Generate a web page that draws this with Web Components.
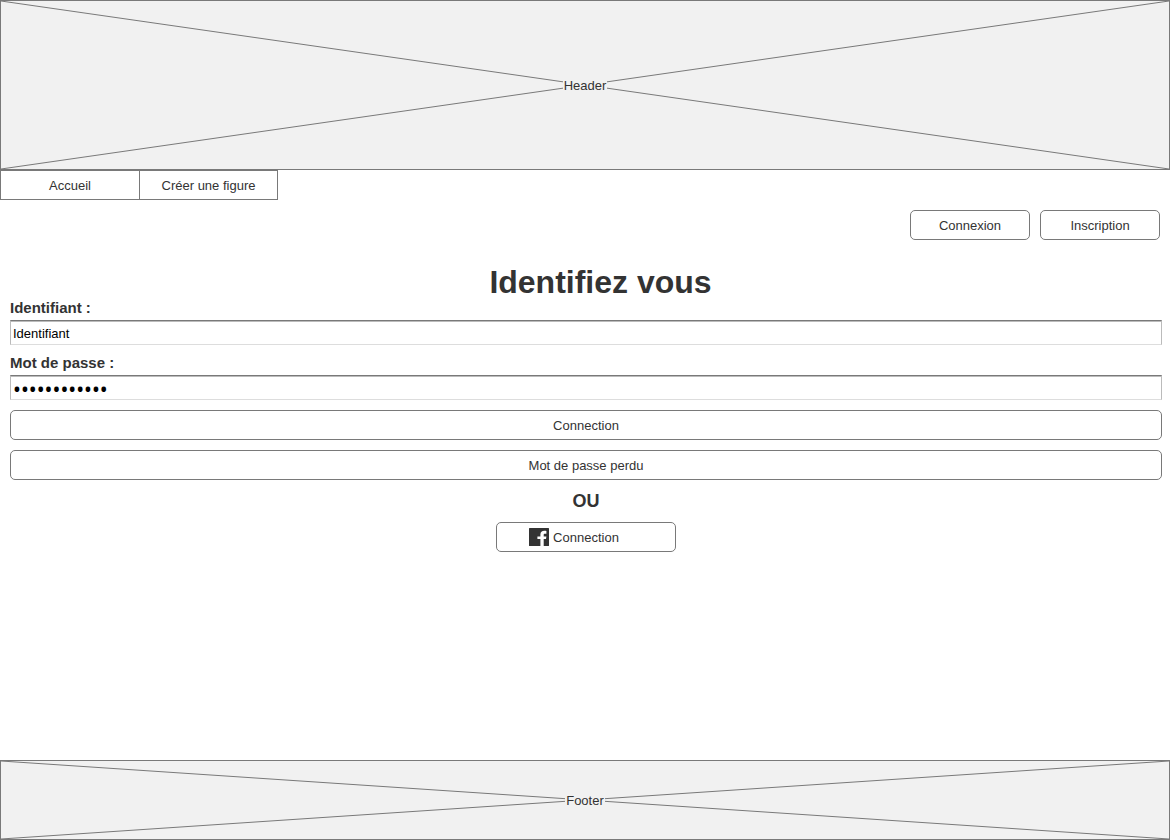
<!DOCTYPE html>
<html lang="fr">
<head>
<meta charset="utf-8">
<title>Identifiez vous</title>
<style>
  body { margin: 0; background: #fff; color: #333; font: 13px/16px "Liberation Sans", Arial, sans-serif; }
</style>
</head>
<body>
<login-page></login-page>
<script>
const define = (name, html, setup) => {
  const template = document.createElement('template');
  template.innerHTML = '<style>*, *::before { box-sizing: border-box; } :host { display: block; box-sizing: border-box; } :host([hidden]) { display: none; }</style>' + html;
  customElements.define(name, class extends HTMLElement {
    constructor() {
      super();
      this.attachShadow({ mode: 'open' }).append(template.content.cloneNode(true));
    }
    connectedCallback() { if (setup) setup(this, this.shadowRoot); }
  });
};

/* Crossed box that stands for a page region */
define('placeholder-box', `
  <style>
    :host { display: grid; place-items: center; height: var(--box-height, 80px); border: 1px solid #797979; background: #f1f1f1; overflow: hidden; }
    svg, span { grid-area: 1 / 1; }
    svg { width: 100%; height: 100%; min-height: 0; display: block; }
    line { stroke: #797979; stroke-width: 1; }
    span { position: relative; padding: 2px 1px 0; background: #f1f1f1; }
  </style>
  <svg aria-hidden="true">
    <line x1="0" y1="0" x2="100%" y2="100%"/><line x1="0" y1="100%" x2="100%" y2="0"/>
  </svg>
  <span><slot></slot></span>`);

define('menu-bar', `
  <style>
    nav { display: flex; }
  </style>
  <nav><slot></slot></nav>`);

define('menu-item', `
  <style>
    :host { width: 138px; }
    :host(:first-child) { width: 140px; }
    a { display: flex; align-items: center; justify-content: center; height: 30px; padding-top: 2px; border: 1px solid #797979; color: inherit; text-decoration: none; background: #fff; }
    :host(:not(:first-child)) a { border-left: 0; }
  </style>
  <a href="#"><slot></slot></a>`);

define('wire-button', `
  <style>
    button { display: grid; grid-template-columns: 1fr auto 1fr; align-items: center; column-gap: 4px; width: 100%; height: 30px; margin: 0; padding: 0; border: 1px solid #797979; border-radius: 5px; background: #fff; color: inherit; font: inherit; cursor: pointer; }
    .icon { display: flex; justify-content: flex-end; }
    .label { grid-column: 2; padding-top: 2px; }
  </style>
  <button type="button"><span class="icon"><slot name="icon"></slot></span><span class="label"><slot></slot></span></button>`);

define('facebook-icon', `
  <style>svg { display: block; }</style>
  <svg width="20" height="18" viewBox="0 0 20 18" aria-hidden="true">
    <path fill="#333" d="M.6 0H19.4Q20 0 20 .6V17.4Q20 18 19.400 18H14.700V11H17L17.400 8.400H14.700V6.800C14.700 6 15 5.700 15.900 5.700H17.400V3C17 2.900 16.200 2.800 15.300 2.800C12.900 2.800 11.400 4.100 11.400 6.400V8.400H8.400V11H11.400V18H.6Q0 18 0 17.400V.6Q0 0 .6 0Z"/>
  </svg>`);

define('text-field', `
  <style>
    label { display: block; font-size: 15px; line-height: 20px; font-weight: bold; }
    input { display: block; width: 100%; height: 25px; margin: 2px 0 0; padding: 2px 2px 0; border: 1px solid; border-color: #797979 #bbb #ddd #bbb; box-shadow: inset 0 1px #bbb; border-radius: 0; background: #fff; color: #000; font: inherit; outline: 0; }
    input[type=password] { font-family: "Noto Sans", sans-serif; font-size: 21px; }
  </style>
  <label for="field"></label>
  <input id="field">`, (host, root) => {
    root.querySelector('label').textContent = host.getAttribute('label');
    const input = root.querySelector('input');
    input.type = host.getAttribute('type') || 'text';
    input.value = host.getAttribute('value') || '';
  });

define('login-form', `
  <style>
    form { display: flex; flex-direction: column; gap: 8px; padding: 0 8px 0 10px; }
    h1 { margin: 0 0 -8px; padding: 8px 0 0 29px; font-size: 32px; line-height: 32px; text-align: center; }
    .actions { display: grid; gap: 10px; padding-top: 2px; }
    h2 { margin: 0; font-size: 18px; line-height: 26px; text-align: center; }
    .social { width: 180px; align-self: center; }
  </style>
  <form>
    <h1>Identifiez vous</h1>
    <text-field label="Identifiant :" value="Identifiant"></text-field>
    <text-field label="Mot de passe :" type="password" value="motdepasse12"></text-field>
    <div class="actions">
      <wire-button>Connection</wire-button>
      <wire-button>Mot de passe perdu</wire-button>
    </div>
    <h2>OU</h2>
    <wire-button class="social"><facebook-icon slot="icon"></facebook-icon>Connection</wire-button>
  </form>`);

define('login-page', `
  <style>
    :host { display: flex; flex-direction: column; min-height: 100vh; }
    .header { --box-height: 170px; }
    .account { display: flex; justify-content: flex-end; gap: 10px; padding: 10px 10px 18px; }
    .account wire-button { width: 120px; }
    main { flex: 1; padding-bottom: 20px; }
  </style>
  <header><placeholder-box class="header">Header</placeholder-box></header>
  <menu-bar>
    <menu-item>Accueil</menu-item>
    <menu-item>Créer une figure</menu-item>
  </menu-bar>
  <main>
    <div class="account">
      <wire-button>Connexion</wire-button>
      <wire-button>Inscription</wire-button>
    </div>
    <login-form></login-form>
  </main>
  <footer><placeholder-box>Footer</placeholder-box></footer>`);
</script>
</body>
</html>
